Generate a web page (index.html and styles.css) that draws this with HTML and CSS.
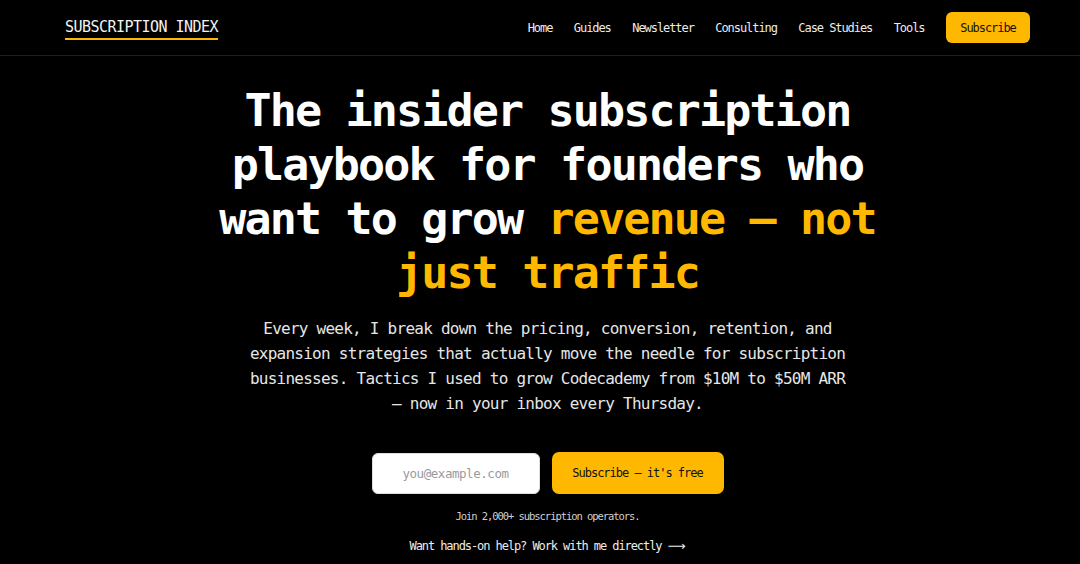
FILE: index.html
```html
<!DOCTYPE html>
<html lang="en">
<head>
<meta charset="utf-8">
<title>Subscription Index</title>
<link rel="stylesheet" href="styles.css">
</head>
<body>
<header class="site-header">
  <div class="header-inner">
    <a class="logo" href="#">SUBSCRIPTION INDEX</a>
    <nav class="nav">
      <a href="#">Home</a>
      <a href="#">Guides</a>
      <a href="#">Newsletter</a>
      <a href="#">Consulting</a>
      <a href="#">Case Studies</a>
      <a href="#">Tools</a>
      <a class="nav-cta" href="#">Subscribe</a>
    </nav>
  </div>
</header>
<main class="hero">
  <h1 class="hero-title">The insider subscription playbook for founders who want to grow <span class="accent">revenue — not just traffic</span></h1>
  <p class="hero-text">Every week, I break down the pricing, conversion, retention, and expansion strategies that actually move the needle for subscription businesses. Tactics I used to grow Codecademy from $10M to $50M ARR — now in your inbox every Thursday.</p>
  <form class="signup">
    <input class="signup-input" type="email" placeholder="you@example.com">
    <button class="signup-btn" type="button">Subscribe — it's free</button>
  </form>
  <p class="join">Join 2,000+ subscription operators.</p>
  <a class="work" href="#">Want hands-on help? Work with me directly <span class="arrow">⟶</span></a>
</main>
</body>
</html>
```
FILE: styles.css
```css
* { box-sizing: border-box; }
html, body { margin: 0; padding: 0; }
body {
  background: #000;
  color: #fff;
  font-family: "DejaVu Sans Mono", "Liberation Mono", monospace;
  width: 1080px;
  height: 564px;
  overflow: hidden;
}
a { color: inherit; text-decoration: none; }

.site-header {
  border-bottom: 1px solid #1e1e1e;
}
.header-inner {
  height: 55px;
  padding: 0 50px 0 65px;
  display: flex;
  align-items: center;
  justify-content: space-between;
}
.logo {
  font-size: 15px;
  letter-spacing: -0.53px;
  line-height: 20px;
  color: #f2f2f2;
  border-bottom: 2px solid #ffb800;
  padding-bottom: 1px;
  margin-top: 1px;
}
.nav {
  display: flex;
  align-items: center;
  gap: 21.5px;
  font-size: 12px;
  letter-spacing: -1.07px;
  color: #ececec;
}
.nav-cta {
  background: #ffb800;
  color: #111;
  border-radius: 6px;
  height: 31px;
  width: 84px;
  display: flex;
  align-items: center;
  justify-content: center;
}

.hero {
  padding: 28px 50px 0 65px;
  display: flex;
  flex-direction: column;
  align-items: center;
  text-align: center;
}
.hero-title {
  margin: 0;
  max-width: 700px;
  font-size: 45px;
  letter-spacing: -1.84px;
  line-height: 54px;
  font-weight: bold;
  color: #fff;
}
.accent { color: #ffb800; }

.hero-text {
  margin: 16px 0 0;
  max-width: 600px;
  font-size: 16px;
  letter-spacing: -0.75px;
  line-height: 25px;
  color: #e6e6e6;
}

.signup {
  margin-top: 36px;
  display: flex;
  gap: 12px;
  align-items: center;
}
.signup-input {
  width: 168px;
  height: 41px;
  border: 1px solid #ddd;
  border-radius: 6px;
  background: #fff;
  font-family: inherit;
  font-size: 12.5px;
  letter-spacing: -0.45px;
  text-align: center;
  padding: 0 12px;
  color: #222;
}
.signup-input::placeholder { color: #9a9a9a; }
.signup-btn {
  width: 172px;
  height: 42px;
  border: 0;
  border-radius: 7px;
  background: #ffb800;
  color: #111;
  font-family: inherit;
  font-size: 12px;
  letter-spacing: -1.02px;
}

.join {
  margin: 14px 0 0;
  font-size: 10.5px;
  letter-spacing: -1.06px;
  line-height: 16px;
  color: #d0d0d0;
}
.work {
  margin-top: 14px;
  font-size: 12px;
  letter-spacing: -1.08px;
  line-height: 16px;
  color: #ededed;
}
.arrow {
  font-family: "DejaVu Sans", sans-serif;
  letter-spacing: 0;
  font-size: 12.5px;
}
```
